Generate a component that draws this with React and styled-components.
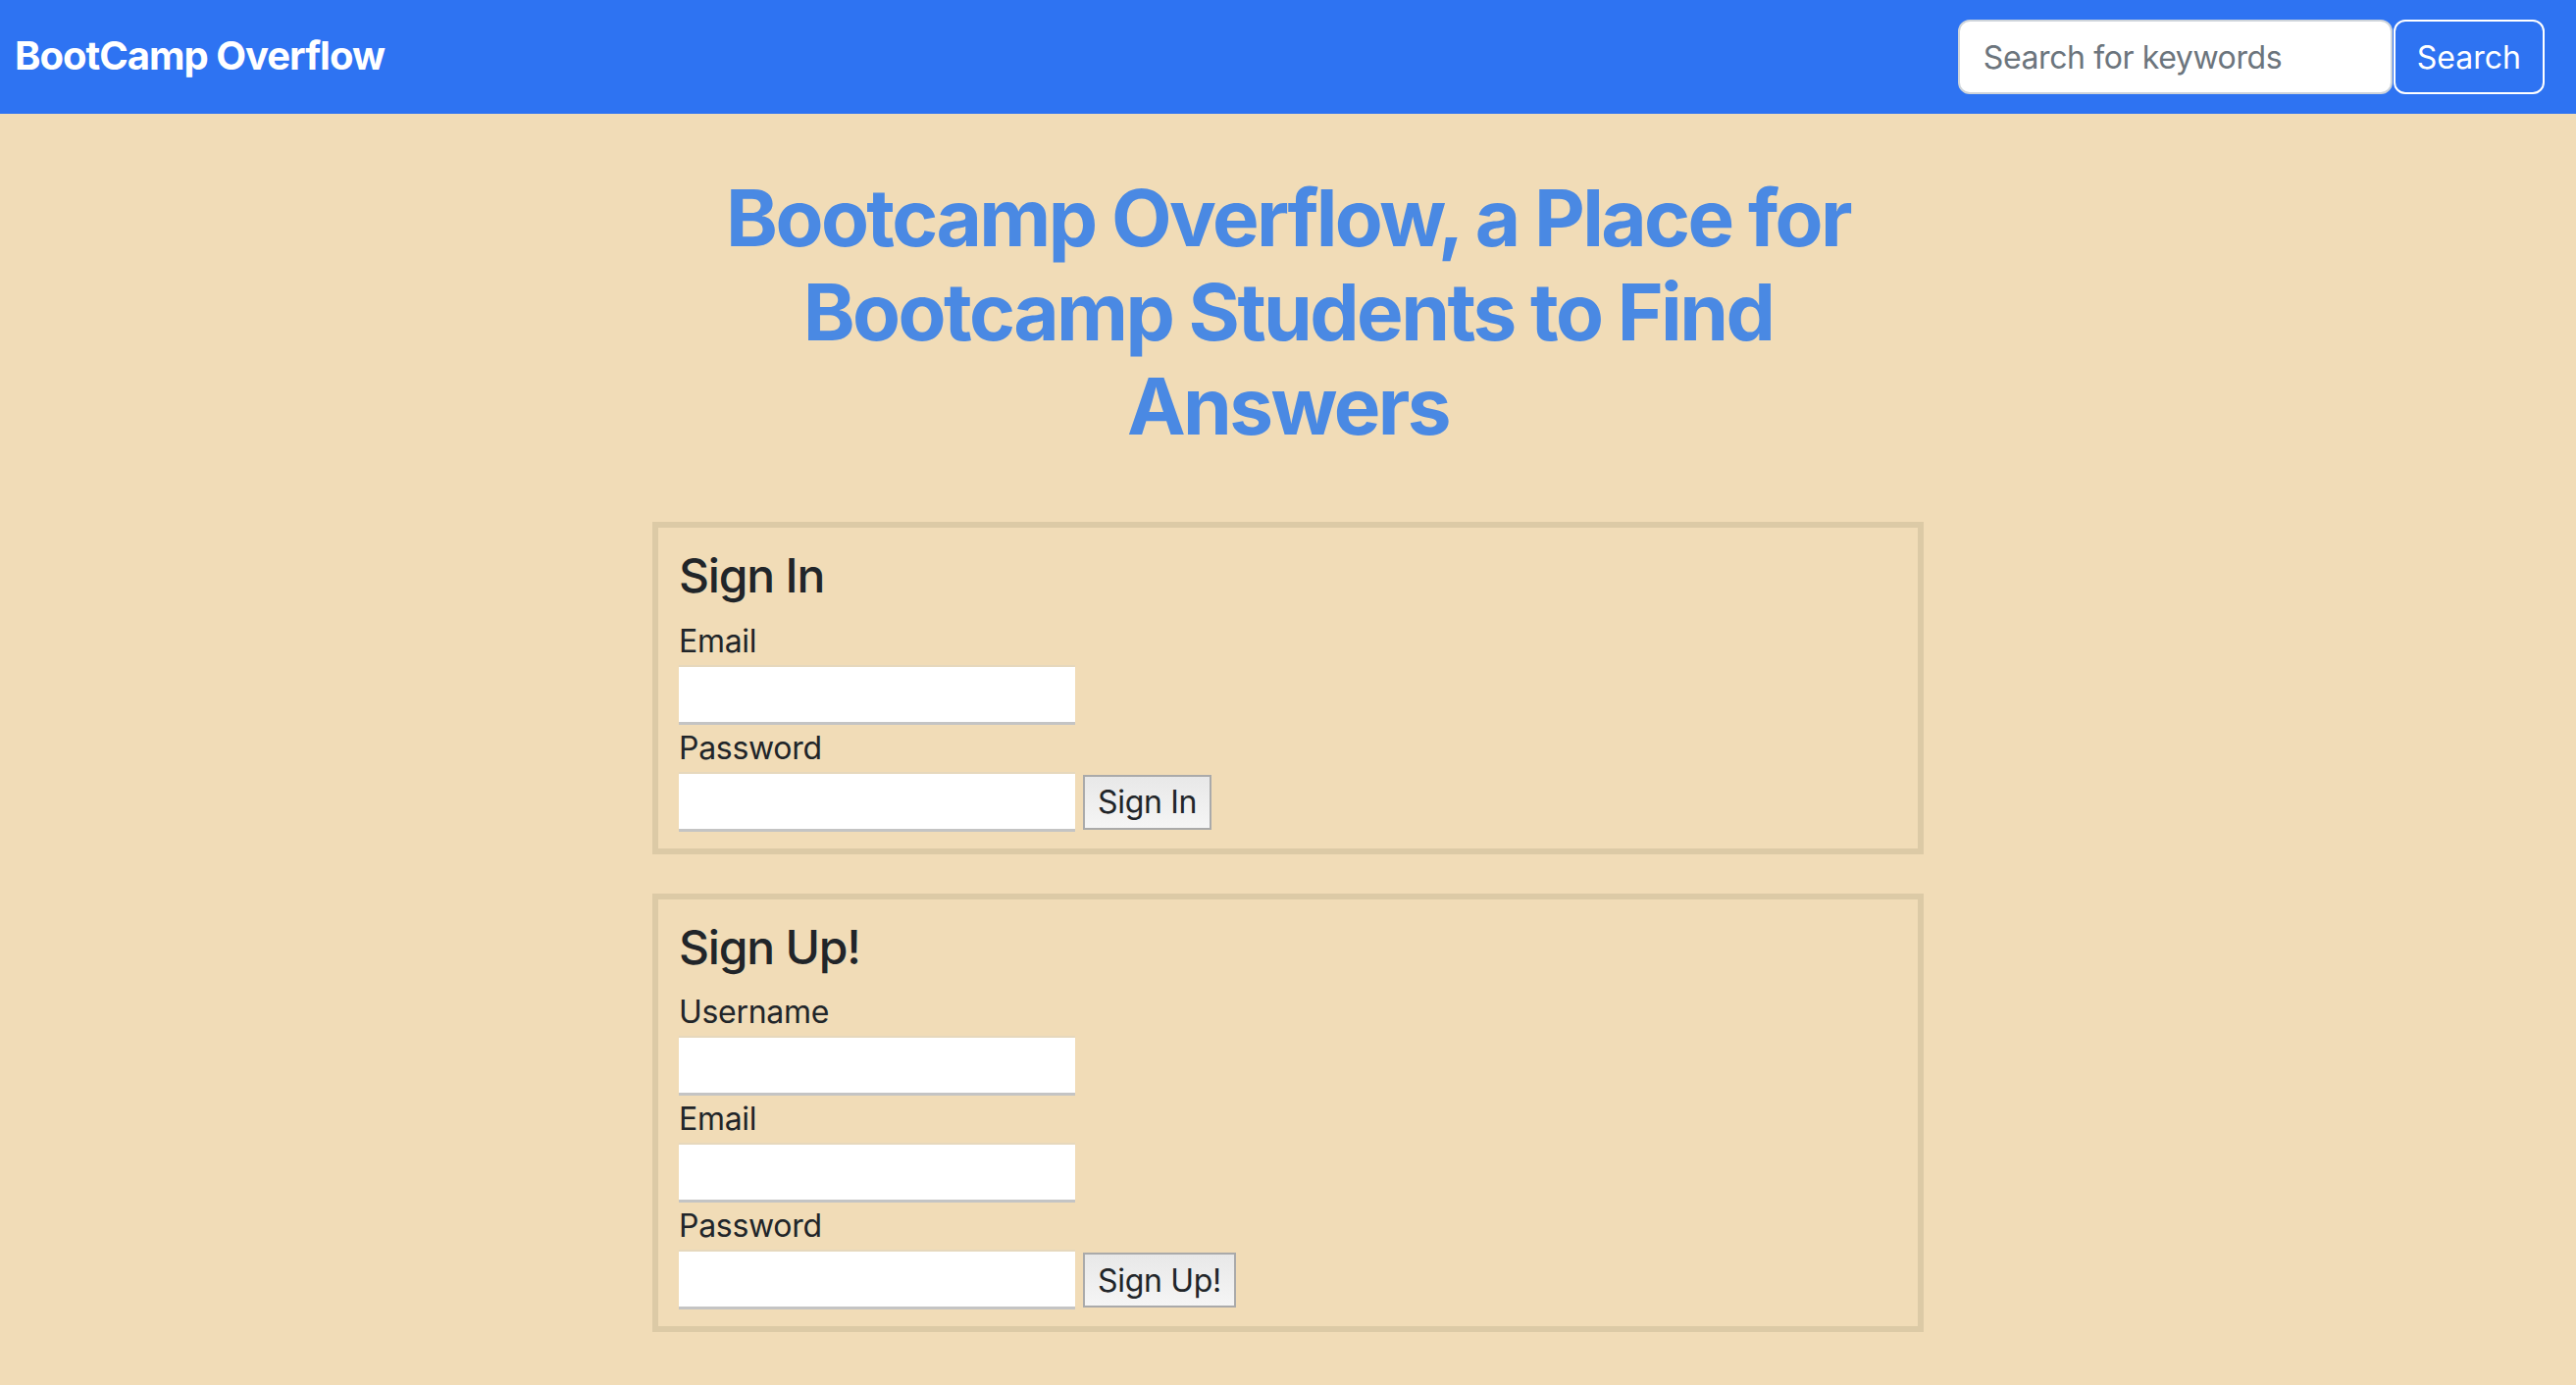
import React from 'react';
import styled, { createGlobalStyle } from 'styled-components';

const GlobalStyle = createGlobalStyle`
  html, body {
    margin: 0;
    padding: 0;
    background: #f1dcb7;
  }
  body {
    font-family: Inter, "Noto Sans", "Liberation Sans", sans-serif;
    font-size: 32px;
    line-height: 1.5;
    color: #212529;
  }
  * {
    box-sizing: border-box;
  }
`;

const Navbar = styled.nav`
  height: 116px;
  background: #2e73f2;
  display: flex;
  align-items: center;
  justify-content: space-between;
  padding: 0 32px 0 15px;
`;

const Brand = styled.a`
  color: #ffffff;
  font-size: 40px;
  font-weight: 700;
  letter-spacing: -1px;
  text-decoration: none;
  line-height: 1.5;
  margin-top: -2px;
`;

const SearchForm = styled.form`
  display: flex;
  align-items: center;
  margin: 0;
`;

const SearchInput = styled.input`
  width: 443px;
  height: 76px;
  padding: 12px 24px;
  font-family: inherit;
  font-size: 32px;
  line-height: 1.5;
  letter-spacing: -0.4px;
  color: #212529;
  background: #ffffff;
  border: 2px solid #ced4da;
  border-radius: 12px;
  margin-right: 1px;
  outline: none;

  &::placeholder {
    color: #6c757d;
  }
`;

const SearchButton = styled.button`
  height: 76px;
  padding: 0 22px;
  font-family: inherit;
  font-size: 32px;
  color: #ffffff;
  background: transparent;
  border: 2px solid #ffffff;
  border-radius: 12px;
  cursor: pointer;
`;

const Main = styled.main`
  width: 1296px;
  margin: 0 auto;
  padding: 58px 0 40px;
`;

const Title = styled.h1`
  margin: 0 0 70px;
  text-align: center;
  font-size: 80px;
  font-weight: 700;
  line-height: 96px;
  letter-spacing: -2.6px;
  color: #4a89e3;
`;

const Panel = styled.form`
  border: 6px solid #dccaa6;
  padding: 20px 21px 17px;
  margin: 0 0 40px;
`;

const PanelHeading = styled.h4`
  margin: 0 0 14px;
  font-size: 48px;
  font-weight: 500;
  line-height: 1.2;
  letter-spacing: -1.2px;
  color: #212529;
`;

const Label = styled.label`
  display: block;
  font-size: 32px;
  line-height: 48px;
  letter-spacing: -0.3px;
`;

const Field = styled.input`
  display: block;
  width: 404px;
  height: 61px;
  padding: 0 8px;
  font-family: inherit;
  font-size: 32px;
  background: #ffffff;
  border: none;
  border-top: 2px solid #e6d8bd;
  border-bottom: 3px solid #c4c4c4;
  outline: none;
`;

const Row = styled.div`
  display: flex;
  align-items: flex-end;
  gap: 8px;
`;

const SubmitButton = styled.button`
  height: 56px;
  margin-bottom: 2px;
  padding: 0 13px;
  font-family: inherit;
  font-size: 32px;
  letter-spacing: -0.3px;
  color: #212529;
  background: linear-gradient(#e8e8e8, #f5f5f5);
  border: 2px solid #aaaaaa;
  border-radius: 0;
  cursor: pointer;
`;

const signIn = {
  heading: 'Sign In',
  fields: [
    { label: 'Email', type: 'email' },
    { label: 'Password', type: 'password' },
  ],
};

const signUp = {
  heading: 'Sign Up!',
  fields: [
    { label: 'Username', type: 'text' },
    { label: 'Email', type: 'email' },
    { label: 'Password', type: 'password' },
  ],
};

function AuthPanel({ data }) {
  const last = data.fields.length - 1;
  return (
    <Panel onSubmit={e => e.preventDefault()}>
      <PanelHeading>{data.heading}</PanelHeading>
      {data.fields.map((field, index) =>
        <div key={field.label + '-' + index}>
          <Label>{field.label}</Label>
          {index === last ? (
            <Row>
              <Field type={field.type} />
              <SubmitButton type="submit">{data.heading}</SubmitButton>
            </Row>
          ) : (
            <Field type={field.type} />
          )}
        </div>
      )}
    </Panel>
  );
}

export default function App() {
  return (
    <>
      <GlobalStyle />
      <Navbar>
        <Brand href="#">BootCamp Overflow</Brand>
        <SearchForm onSubmit={e => e.preventDefault()}>
          <SearchInput placeholder="Search for keywords" />
          <SearchButton type="submit">Search</SearchButton>
        </SearchForm>
      </Navbar>
      <Main>
        <Title>Bootcamp Overflow, a Place for Bootcamp Students to Find Answers</Title>
        <AuthPanel data={signIn} />
        <AuthPanel data={signUp} />
      </Main>
    </>
  );
}
